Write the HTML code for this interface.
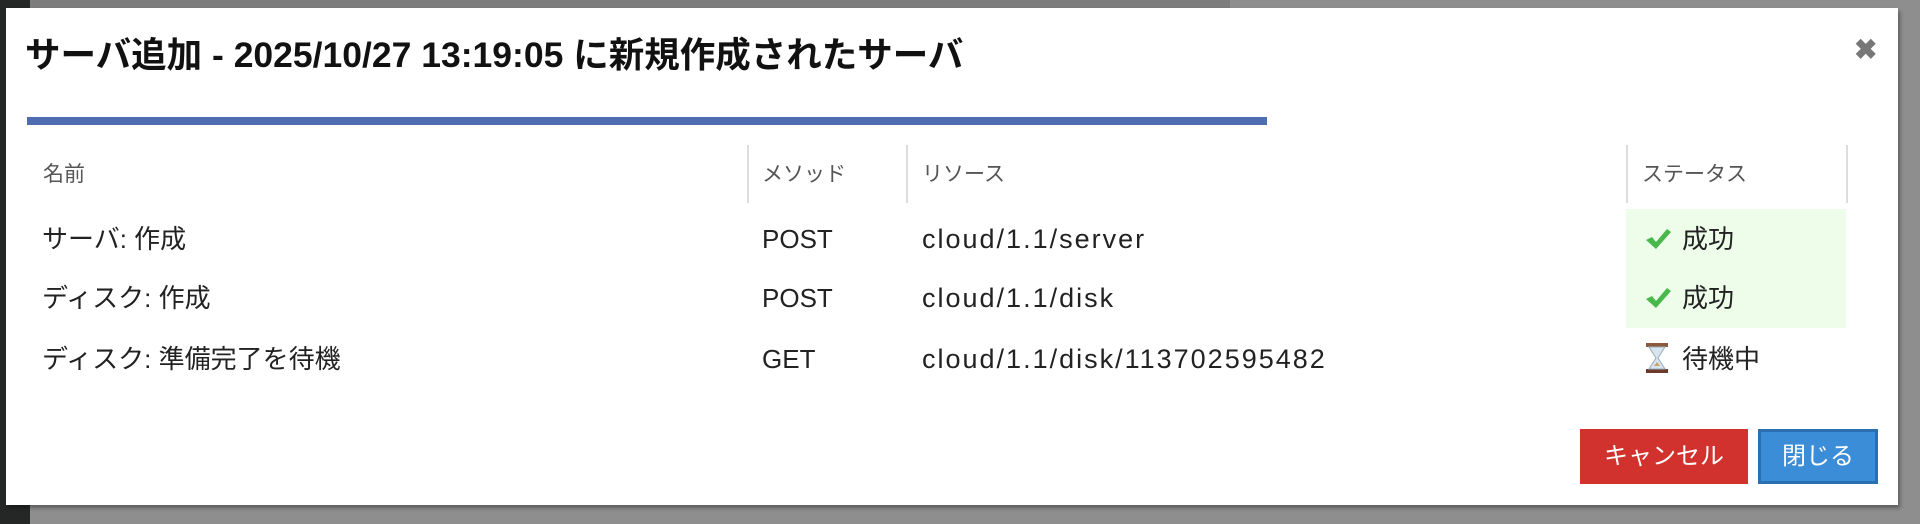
<!DOCTYPE html>
<html><head><meta charset="utf-8"><style>
body{margin:0;width:1920px;height:524px;overflow:hidden;background:#8e8e8e;font-family:"Liberation Sans","Noto Sans CJK JP",sans-serif;position:relative}
.l{position:absolute;left:0;top:0;width:30px;height:524px;background:#252727}
.t{position:absolute;left:30px;top:0;width:1200px;height:8px;background:#7d7d7d}
.m{position:absolute;left:6px;top:8px;width:1892px;height:497px;background:#fff;box-shadow:2px 3px 4px rgba(0,0,0,.35)}
.a{position:absolute;white-space:nowrap;line-height:40px}
h1{position:absolute;left:19px;top:27px;margin:0;font-size:35.5px;line-height:40px;font-weight:bold;color:#111;white-space:nowrap}
.bar{position:absolute;left:21px;top:109px;width:1240px;height:8px;background:#4f6cb0}
.sep{position:absolute;top:137px;width:2px;height:58px;background:#ddd}
.h{font-size:21px;color:#555;top:147px}
.r{font-size:26px;color:#222}
.c{letter-spacing:2px;font-size:27px}
.g{position:absolute;left:1620px;top:201px;width:220px;height:119px;background:#edfdea}
.btn{position:absolute;top:421px;height:55px;color:#fff;font-size:24px;text-align:center;line-height:55px;box-sizing:border-box}
</style></head><body>
<div class="l"></div><div class="t"></div>
<div class="m">
<h1>サーバ追加 - 2025/10/27 13:19:05 に新規作成されたサーバ</h1>
<div class="a" style="left:1848px;top:22px;font-size:28px;color:#777;font-weight:bold">✖</div>
<div class="bar"></div>
<div class="sep" style="left:741px"></div><div class="sep" style="left:900px"></div><div class="sep" style="left:1620px"></div><div class="sep" style="left:1840px"></div>
<div class="g"></div>
<div class="a h" style="left:37px">名前</div>
<div class="a h" style="left:756px">メソッド</div>
<div class="a h" style="left:916px">リソース</div>
<div class="a h" style="left:1636px">ステータス</div>

<div class="a r" style="left:36px;top:211px">サーバ: 作成</div>
<div class="a r" style="left:756px;top:211px">POST</div>
<div class="a r c" style="left:916px;top:211px">cloud/1.1/server</div>
<div class="a r" style="left:1676px;top:211px">成功</div>
<div class="a r" style="left:36px;top:270px">ディスク: 作成</div>
<div class="a r" style="left:756px;top:270px">POST</div>
<div class="a r c" style="left:916px;top:270px">cloud/1.1/disk</div>
<div class="a r" style="left:1676px;top:270px">成功</div>
<div class="a r" style="left:36px;top:331px">ディスク: 準備完了を待機</div>
<div class="a r" style="left:756px;top:331px">GET</div>
<div class="a r c" style="left:916px;top:331px">cloud/1.1/disk/113702595482</div>
<div class="a r" style="left:1676px;top:331px">待機中</div>

<svg class="a" style="left:1637px;top:218px" width="30" height="26" viewBox="0 0 30 26"><path d="M3 14 L9 11 L13 16 L24 3 L28 6 L13 23 Z" fill="#49b84a"/></svg>
<svg class="a" style="left:1637px;top:277px" width="30" height="26" viewBox="0 0 30 26"><path d="M3 14 L9 11 L13 16 L24 3 L28 6 L13 23 Z" fill="#49b84a"/></svg>
<svg class="a" style="left:1638px;top:334px" width="26" height="32" viewBox="0 0 26 32"><rect x="2" y="1" width="22" height="4" fill="#8a5a3a"/><rect x="2" y="27" width="22" height="4" fill="#6a3a2a"/><path d="M5 5 H21 L14 16 L21 27 H5 L12 16 Z" fill="#d8e4ee" stroke="#9ab" stroke-width="1"/><path d="M10 24 H16 L13 20 Z" fill="#c9a36a"/></svg>

<div class="btn" style="left:1574px;width:168px;background:#d2322d">キャンセル</div>
<div class="btn" style="left:1752px;width:120px;background:#3a8dd6;border:3px solid #2a6fb0;line-height:49px">閉じる</div>
</div>
</body></html>
